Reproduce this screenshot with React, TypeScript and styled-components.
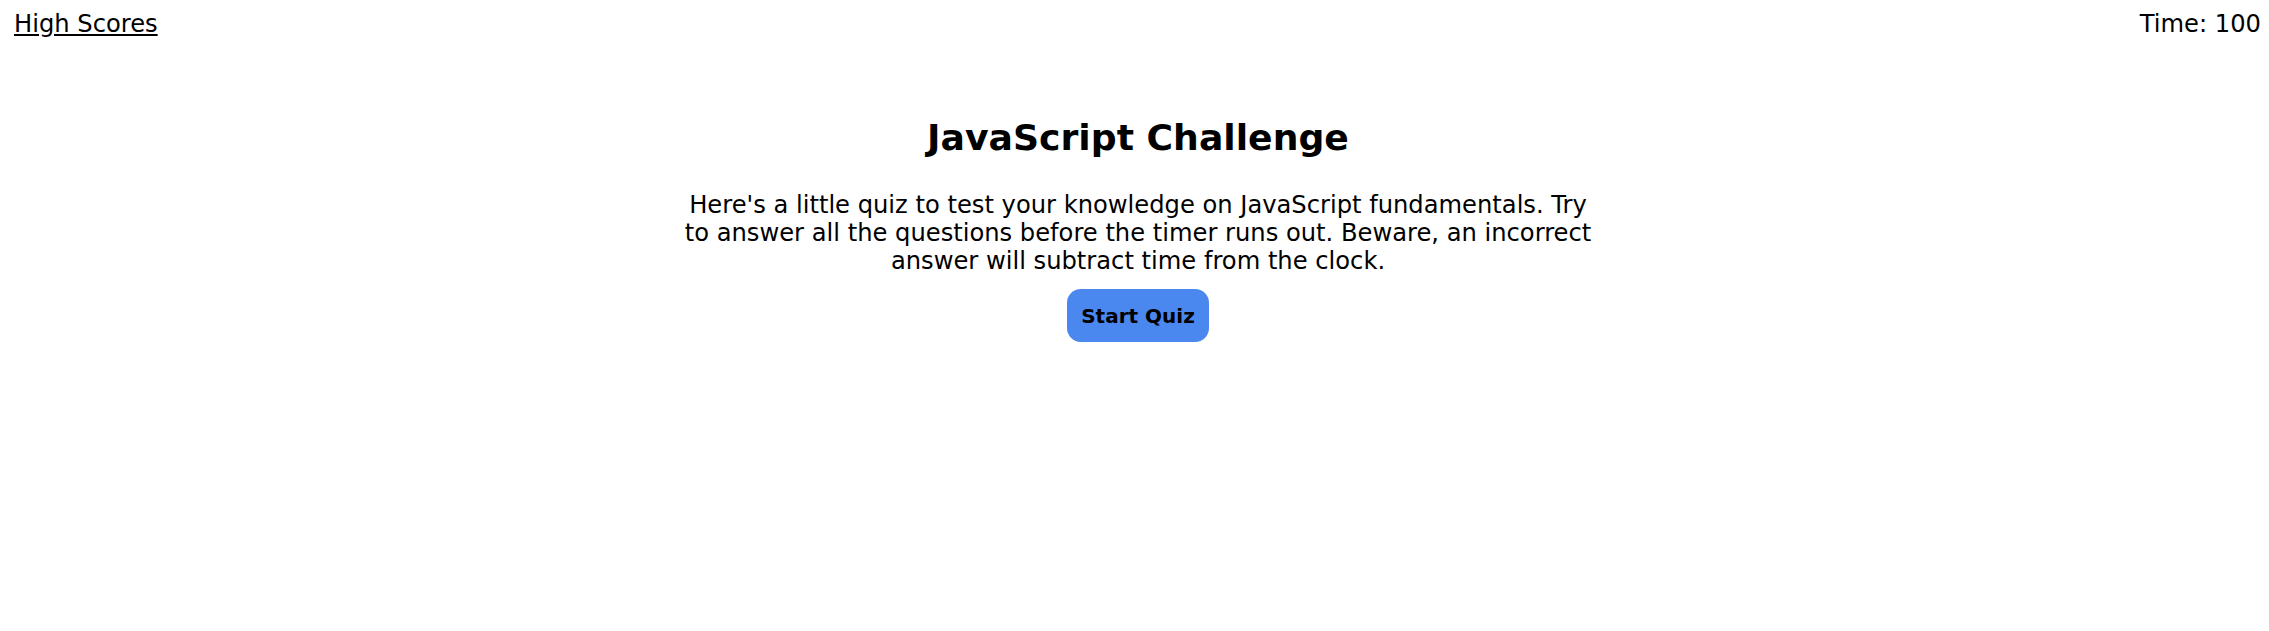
import React from "react";
import styled, {createGlobalStyle} from "styled-components";

const GlobalStyle = createGlobalStyle`
  html, body {
    margin: 0;
    padding: 0;
    background: #ffffff;
    color: #000000;
    font-family: "DejaVu Sans", Verdana, sans-serif;
  }
`;

const App = () => {
  return (
    <>
      <GlobalStyle />
      <Header>
        <ScoresLink href="#">High Scores</ScoresLink>
        <Timer>Time: 100</Timer>
      </Header>
      <Main>
        <Title>JavaScript Challenge</Title>
        <Intro>
          Here's a little quiz to test your knowledge on JavaScript
          fundamentals. Try to answer all the questions before the timer runs
          out. Beware, an incorrect answer will subtract time from the clock.
        </Intro>
        <StartButton>Start Quiz</StartButton>
      </Main>
    </>
  );
};

const Header = styled.header`
  display: flex;
  justify-content: space-between;
  align-items: center;
  padding: 10px 8px 0 14px;
  font-size: 24.2px;
  line-height: 29px;
`;

const ScoresLink = styled.a`
  color: #000000;
  text-decoration: underline;
`;

const Timer = styled.span``;

const Main = styled.main`
  display: flex;
  flex-direction: column;
  align-items: center;
  text-align: center;
  margin-top: 77px;
  padding-left: 7px;
`;

const Title = styled.h1`
  margin: 0;
  font-size: 36.2px;
  font-weight: bold;
  line-height: 44px;
`;

const Intro = styled.p`
  max-width: 926px;
  margin: 31px 0 14px;
  font-size: 24.2px;
  line-height: 28px;
`;

const StartButton = styled.button`
  width: 142px;
  height: 53px;
  border: none;
  border-radius: 14px;
  background: #4a87ee;
  color: #000000;
  font-family: "DejaVu Sans", Verdana, sans-serif;
  font-size: 20px;
  font-weight: bold;
  cursor: pointer;
`;

export default App;
